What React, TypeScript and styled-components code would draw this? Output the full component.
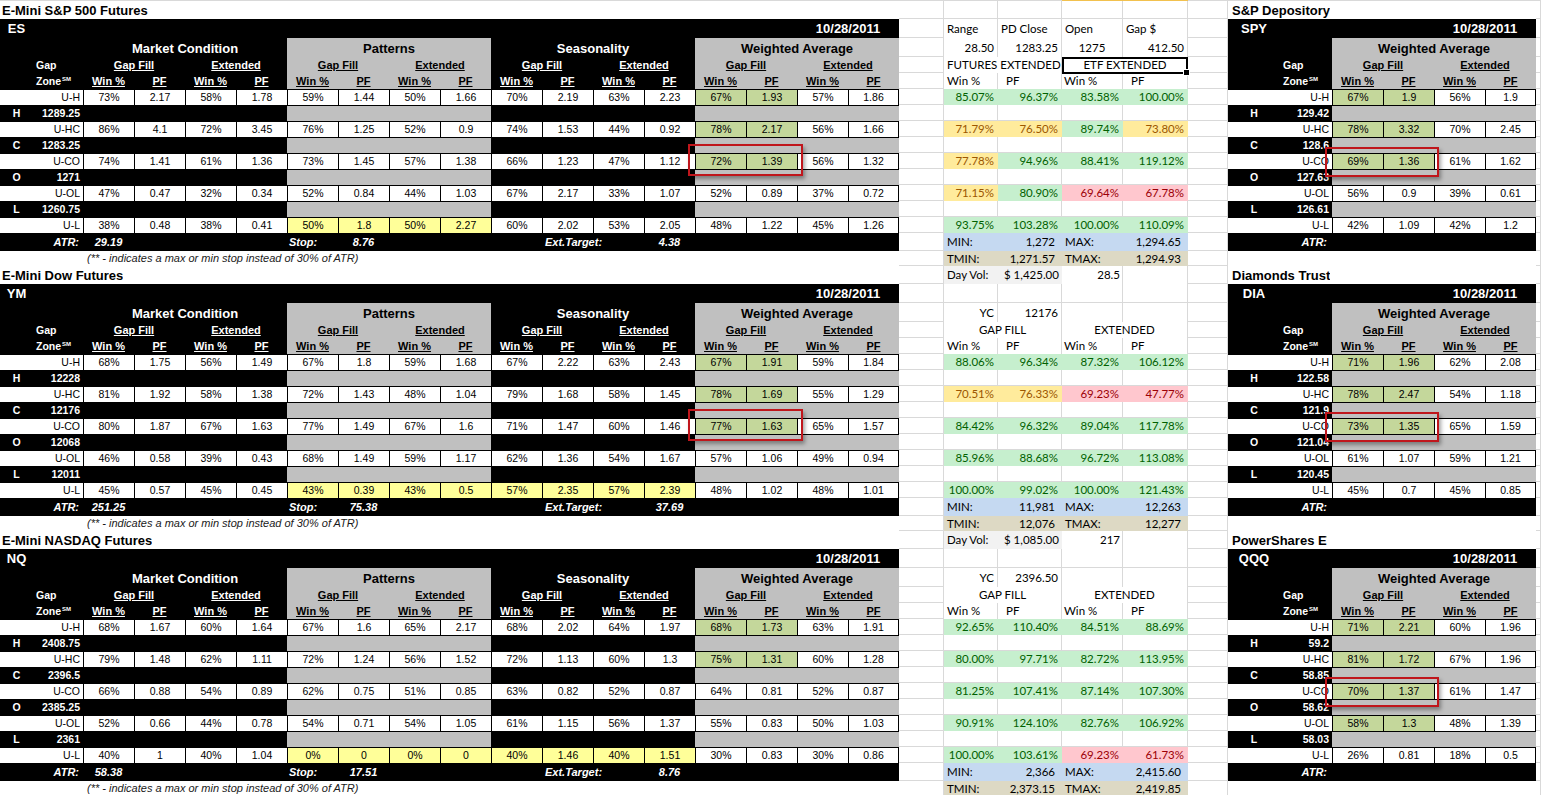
import React from 'react';
import styled, { createGlobalStyle } from 'styled-components';

const GRID = '#d9d9d9';
const GRAY = '#c0c0c0';
const OLIVE = '#c4d79b';
const LEMON = '#ffff99';
const ARIAL = '"Liberation Sans", Arial, sans-serif';
const CALIBRI = 'Lato, "Open Sans", sans-serif';
const DATE = '10/28/2011';
// row heights of one sheet section (title, code, 3 header rows, 9 zone rows, ATR, note)
const ROWS = [18, 19, 19, 16, 16, 16, 16, 16, 16, 16, 16, 16, 16, 16, 18, 15];
const ZONES = ['U-H', 'U-HC', 'U-CO', 'U-OL', 'U-L'];
const TAGS = ['H', 'C', 'O', 'L'];

type Align = 'left' | 'right' | 'center';
type Tone = 'g' | 'y' | 'r';
const TONE_FILL: Record<Tone, string> = { g: '#c6efce', y: '#ffeb9c', r: '#ffc7ce' };
const TONE_INK: Record<Tone, string> = { g: '#006100', y: '#9c5700', r: '#9c0006' };

interface Box { x: number; y: number; w: number; h: number }
interface Group { name: string; light: boolean }

interface Future {
  title: string;
  code: string;
  values: string[][];
  levels: string[];
  atr: string;
  stop: string;
  target: string;
  yellow: number[];
  green: number;
  mark: boolean;
}

interface Etf {
  title: string;
  clip?: number;
  code: string;
  values: string[][];
  levels: string[];
  green: number;
}

interface Spec { t?: string; a?: Align; p?: number }

interface Stats {
  heading: Spec[];
  basis: Spec[];
  captions: [string, string];
  picked: boolean;
  results: string[][];
  min: [string, string];
  max: [string, string];
  dayVol: [string, string];
}

const FUT_GROUPS: Group[] = [
  { name: 'Market Condition', light: false },
  { name: 'Patterns', light: true },
  { name: 'Seasonality', light: false },
  { name: 'Weighted Average', light: true },
];
const ETF_GROUPS: Group[] = [{ name: 'Weighted Average', light: true }];

const SECTIONS: { future: Future; stats: Stats; etf: Etf }[] = [
  {
    future: {
      title: 'E-Mini S&P 500 Futures',
      code: 'ES',
      values: [
        ['73%', '2.17', '58%', '1.78', '59%', '1.44', '50%', '1.66', '70%', '2.19', '63%', '2.23', '67%', '1.93', '57%', '1.86'],
        ['86%', '4.1', '72%', '3.45', '76%', '1.25', '52%', '0.9', '74%', '1.53', '44%', '0.92', '78%', '2.17', '56%', '1.66'],
        ['74%', '1.41', '61%', '1.36', '73%', '1.45', '57%', '1.38', '66%', '1.23', '47%', '1.12', '72%', '1.39', '56%', '1.32'],
        ['47%', '0.47', '32%', '0.34', '52%', '0.84', '44%', '1.03', '67%', '2.17', '33%', '1.07', '52%', '0.89', '37%', '0.72'],
        ['38%', '0.48', '38%', '0.41', '50%', '1.8', '50%', '2.27', '60%', '2.02', '53%', '2.05', '48%', '1.22', '45%', '1.26'],
      ],
      levels: ['1289.25', '1283.25', '1271', '1260.75'],
      atr: '29.19',
      stop: '8.76',
      target: '4.38',
      yellow: [1],
      green: 3,
      mark: true,
    },
    stats: {
      heading: [{ t: 'Range' }, { t: 'PD Close' }, { t: 'Open' }, { t: 'Gap $' }],
      basis: [{ t: '28.50', a: 'right' }, { t: '1283.25', a: 'right' }, { t: '1275', a: 'center' }, { t: '412.50', a: 'right' }],
      captions: ['FUTURES EXTENDED', 'ETF EXTENDED'],
      picked: true,
      results: [
        ['85.07%:g', '96.37%:g', '83.58%:g', '100.00%:g'],
        ['71.79%:y', '76.50%:y', '89.74%:g', '73.80%:y'],
        ['77.78%:y', '94.96%:g', '88.41%:g', '119.12%:g'],
        ['71.15%:y', '80.90%:g', '69.64%:r', '67.78%:r'],
        ['93.75%:g', '103.28%:g', '100.00%:g', '110.09%:g'],
      ],
      min: ['1,272', '1,294.65'],
      max: ['1,271.57', '1,294.93'],
      dayVol: ['$ 1,425.00', '28.5'],
    },
    etf: {
      title: 'S&P Depository',
      code: 'SPY',
      values: [
        ['67%', '1.9', '56%', '1.9'],
        ['78%', '3.32', '70%', '2.45'],
        ['69%', '1.36', '61%', '1.62'],
        ['56%', '0.9', '39%', '0.61'],
        ['42%', '1.09', '42%', '1.2'],
      ],
      levels: ['129.42', '128.6', '127.63', '126.61'],
      green: 3,
    },
  },
  {
    future: {
      title: 'E-Mini Dow Futures',
      code: 'YM',
      values: [
        ['68%', '1.75', '56%', '1.49', '67%', '1.8', '59%', '1.68', '67%', '2.22', '63%', '2.43', '67%', '1.91', '59%', '1.84'],
        ['81%', '1.92', '58%', '1.38', '72%', '1.43', '48%', '1.04', '79%', '1.68', '58%', '1.45', '78%', '1.69', '55%', '1.29'],
        ['80%', '1.87', '67%', '1.63', '77%', '1.49', '67%', '1.6', '71%', '1.47', '60%', '1.46', '77%', '1.63', '65%', '1.57'],
        ['46%', '0.58', '39%', '0.43', '68%', '1.49', '59%', '1.17', '62%', '1.36', '54%', '1.67', '57%', '1.06', '49%', '0.94'],
        ['45%', '0.57', '45%', '0.45', '43%', '0.39', '43%', '0.5', '57%', '2.35', '57%', '2.39', '48%', '1.02', '48%', '1.01'],
      ],
      levels: ['12228', '12176', '12068', '12011'],
      atr: '251.25',
      stop: '75.38',
      target: '37.69',
      yellow: [1, 2],
      green: 3,
      mark: true,
    },
    stats: {
      heading: [{}, {}, {}, {}],
      basis: [{ t: 'YC', a: 'right' }, { t: '12176', a: 'right' }, {}, {}],
      captions: ['GAP FILL', 'EXTENDED'],
      picked: false,
      results: [
        ['88.06%:g', '96.34%:g', '87.32%:g', '106.12%:g'],
        ['70.51%:y', '76.33%:y', '69.23%:r', '47.77%:r'],
        ['84.42%:g', '96.32%:g', '89.04%:g', '117.78%:g'],
        ['85.96%:g', '88.68%:g', '96.72%:g', '113.08%:g'],
        ['100.00%:g', '99.02%:g', '100.00%:g', '121.43%:g'],
      ],
      min: ['11,981', '12,263'],
      max: ['12,076', '12,277'],
      dayVol: ['$ 1,085.00', '217'],
    },
    etf: {
      title: 'Diamonds Trust',
      code: 'DIA',
      values: [
        ['71%', '1.96', '62%', '2.08'],
        ['78%', '2.47', '54%', '1.18'],
        ['73%', '1.35', '65%', '1.59'],
        ['61%', '1.07', '59%', '1.21'],
        ['45%', '0.7', '45%', '0.85'],
      ],
      levels: ['122.58', '121.9', '121.04', '120.45'],
      green: 3,
    },
  },
  {
    future: {
      title: 'E-Mini NASDAQ Futures',
      code: 'NQ',
      values: [
        ['68%', '1.67', '60%', '1.64', '67%', '1.6', '65%', '2.17', '68%', '2.02', '64%', '1.97', '68%', '1.73', '63%', '1.91'],
        ['79%', '1.48', '62%', '1.11', '72%', '1.24', '56%', '1.52', '72%', '1.13', '60%', '1.3', '75%', '1.31', '60%', '1.28'],
        ['66%', '0.88', '54%', '0.89', '62%', '0.75', '51%', '0.85', '63%', '0.82', '52%', '0.87', '64%', '0.81', '52%', '0.87'],
        ['52%', '0.66', '44%', '0.78', '54%', '0.71', '54%', '1.05', '61%', '1.15', '56%', '1.37', '55%', '0.83', '50%', '1.03'],
        ['40%', '1', '40%', '1.04', '0%', '0', '0%', '0', '40%', '1.46', '40%', '1.51', '30%', '0.83', '30%', '0.86'],
      ],
      levels: ['2408.75', '2396.5', '2385.25', '2361'],
      atr: '58.38',
      stop: '17.51',
      target: '8.76',
      yellow: [1, 2],
      green: 2,
      mark: false,
    },
    stats: {
      heading: [{}, {}, {}, {}],
      basis: [{ t: 'YC', a: 'right' }, { t: '2396.50', a: 'right' }, {}, {}],
      captions: ['GAP FILL', 'EXTENDED'],
      picked: false,
      results: [
        ['92.65%:g', '110.40%:g', '84.51%:g', '88.69%:g'],
        ['80.00%:g', '97.71%:g', '82.72%:g', '113.95%:g'],
        ['81.25%:g', '107.41%:g', '87.14%:g', '107.30%:g'],
        ['90.91%:g', '124.10%:g', '82.76%:g', '106.92%:g'],
        ['100.00%:g', '103.61%:g', '69.23%:r', '61.73%:r'],
      ],
      min: ['2,366', '2,415.60'],
      max: ['2,373.15', '2,419.85'],
      dayVol: ['', ''],
    },
    etf: {
      title: 'PowerShares ETF',
      clip: 95,
      code: 'QQQ',
      values: [
        ['71%', '2.21', '60%', '1.96'],
        ['81%', '1.72', '67%', '1.96'],
        ['70%', '1.37', '61%', '1.47'],
        ['58%', '1.3', '48%', '1.39'],
        ['26%', '0.81', '18%', '0.5'],
      ],
      levels: ['59.2', '58.85', '58.62', '58.03'],
      green: 4,
    },
  },
];

const GlobalStyle = createGlobalStyle`
  html, body { margin: 0; padding: 0; background: #fff; }
  body { overflow: hidden; }
`;

const Sheet = styled.div`
  width: 1541px;
  height: 795px;
  overflow: hidden;
  background: #fff;
`;

const TopRule = styled.div`
  display: flex;
  height: 1px;
`;

const RuleSeg = styled.span<{ $w: number; $gold?: boolean }>`
  width: ${p => p.$w}px;
  background: ${p => (p.$gold ? '#f2c14e' : GRID)};
`;

const Section = styled.div`
  display: grid;
  grid-template-columns: 899px 45px 244px 40px 308px 5px;
  height: 265px;
`;

const Column = styled.div`
  display: flex;
  flex-direction: column;
`;

const GapCell = styled.div<{ $h: number }>`
  height: ${p => p.$h}px;
  box-sizing: border-box;
  border-right: 1px solid ${GRID};
  border-bottom: 1px solid ${GRID};
`;

/* ---------- black zone tables ---------- */

const Block = styled.div`
  position: relative;
  display: flex;
  flex-direction: column;
  font-family: ${ARIAL};
  color: #000;
`;

const TitleRow = styled.div<{ $inset: number }>`
  height: 18px;
  box-sizing: border-box;
  padding: 0 0 1px ${p => p.$inset}px;
  display: flex;
  align-items: flex-end;
  font-size: 13px;
  font-weight: bold;
  line-height: 15px;
  background: #fff;
  white-space: nowrap;
`;

const TitleText = styled.span<{ $clip?: number }>`
  display: block;
  overflow: hidden;
  max-width: ${p => (p.$clip ? `${p.$clip}px` : 'none')};
`;

const CodeRow = styled.div`
  height: 19px;
  display: flex;
  justify-content: space-between;
  align-items: center;
  background: #000;
  color: #fff;
  font-size: 13px;
  font-weight: bold;
`;

const CodeCell = styled.span<{ $w: number }>`
  width: ${p => p.$w}px;
  text-align: center;
  white-space: nowrap;
`;

const HeaderRow = styled.div<{ $cols: string }>`
  display: grid;
  grid-template-columns: ${p => p.$cols};
  height: 51px;
  background: #000;
`;

const ZoneHead = styled.div<{ $indent: number }>`
  display: grid;
  grid-template-rows: 19px 16px 16px;
  padding-left: ${p => p.$indent}px;
  color: #fff;
  font-size: 10.5px;
  font-weight: bold;
  line-height: 16px;
  white-space: nowrap;

  sup {
    font-size: 6px;
    line-height: 0;
    vertical-align: 4px;
    margin-left: 1px;
  }
`;

const GroupHead = styled.div<{ $light: boolean }>`
  display: grid;
  grid-template-columns: repeat(4, 1fr);
  grid-template-rows: 19px 16px 16px;
  background: ${p => (p.$light ? GRAY : '#000')};
  color: ${p => (p.$light ? '#000' : '#fff')};
  font-weight: bold;
  text-align: center;
  white-space: nowrap;
`;

const GroupTitle = styled.span`
  grid-column: 1 / -1;
  font-size: 13px;
  line-height: 21px;
`;

const SubHead = styled.span`
  grid-column: span 2;
  font-size: 11px;
  line-height: 16px;
  text-decoration: underline;
`;

const ColHead = styled.span`
  font-size: 11px;
  line-height: 16px;
  text-decoration: underline;
`;

const SepRow = styled.div<{ $cols: string }>`
  display: grid;
  grid-template-columns: ${p => p.$cols};
  height: 16px;
  background: #000;
  color: #fff;
  font-size: 10.5px;
  font-weight: bold;
  line-height: 16px;
`;

const Tag = styled.span`
  text-align: center;
`;

const Price = styled.span`
  text-align: right;
  padding-right: 3px;
`;

const Band = styled.span<{ $light: boolean }>`
  background: ${p => (p.$light ? GRAY : '#000')};
  border-top: 1px solid #000;
`;

const DataRow = styled.div<{ $cols: string }>`
  display: grid;
  grid-template-columns: ${p => p.$cols};
  height: 16px;
  box-sizing: border-box;
  border-top: 1px solid #000;
  background: #fff;
  font-size: 10.5px;
  line-height: 15px;
`;

const ZoneName = styled.span`
  text-align: right;
  padding-right: 3px;
`;

const Value = styled.span<{ $fill?: string }>`
  text-align: center;
  border-left: 1px solid #000;
  background: ${p => p.$fill ?? '#fff'};

  &:last-child {
    border-right: 1px solid #000;
  }
`;

const FootRow = styled.div<{ $cols: string }>`
  display: grid;
  grid-template-columns: ${p => p.$cols};
  height: 18px;
  background: #000;
  color: #fff;
  font-size: 11px;
  font-weight: bold;
  font-style: italic;
  line-height: 18px;
  white-space: nowrap;
`;

const FootCell = styled.span<{ $col: number; $align: Align; $pad?: number }>`
  grid-column: ${p => p.$col};
  grid-row: 1;
  text-align: ${p => p.$align};
  padding: 0 ${p => p.$pad ?? 0}px;
`;

const NoteRow = styled.div`
  height: 15px;
  padding-left: 87px;
  font-size: 11px;
  font-style: italic;
  line-height: 15px;
  color: #1a1a1a;
  white-space: nowrap;
`;

const BlankRow = styled.div<{ $h: number }>`
  height: ${p => p.$h}px;
  background: #fff;
`;

const Mark = styled.div<{ $box: Box }>`
  position: absolute;
  left: ${p => p.$box.x}px;
  top: ${p => p.$box.y}px;
  width: ${p => p.$box.w}px;
  height: ${p => p.$box.h}px;
  box-sizing: border-box;
  border: 2px solid #c0161c;
  box-shadow: 2px 3px 4px rgba(0, 0, 0, 0.35);
  pointer-events: none;
`;

/* ---------- middle stats panel ---------- */

const Panel = styled.div`
  display: flex;
  flex-direction: column;
  font-family: ${CALIBRI};
  font-size: 11.5px;
  color: #000;
`;

const StatRow = styled.div<{ $h: number }>`
  display: grid;
  grid-template-columns: 54px 64px 61px 65px;
  height: ${p => p.$h}px;
  line-height: ${p => p.$h}px;
`;

const Cell = styled.div<{ $fill?: string; $ink?: string; $align?: Align; $pad?: number; $span?: number; $rule?: boolean }>`
  grid-column: span ${p => p.$span ?? 1};
  box-sizing: border-box;
  border-right: 1px solid ${p => p.$fill ?? GRID};
  border-bottom: 1px solid ${p => (p.$rule ? '#000' : GRID)};
  background: ${p => p.$fill ?? '#fff'};
  color: ${p => p.$ink ?? '#000'};
  text-align: ${p => p.$align ?? 'left'};
  padding: 0 ${p => p.$pad ?? 3}px;
  white-space: nowrap;
  line-height: inherit;
`;

const Picked = styled(Cell)`
  position: relative;
  border: 2px solid #000;
  line-height: 12px;

  &::after {
    content: '';
    position: absolute;
    right: -4px;
    bottom: -4px;
    width: 5px;
    height: 5px;
    background: #000;
    border: 1px solid #fff;
  }
`;

function GapColumn() {
  return (
    <Column>
      {ROWS.map((h, i) => (
        <GapCell key={i} $h={h} />
      ))}
    </Column>
  );
}

interface ZoneTableProps {
  title: string;
  inset: number;
  clip?: number;
  code: string;
  lead: [number, number];
  groups: Group[];
  values: string[][];
  levels: string[];
  fillFor: (row: number, col: number) => string | undefined;
  footer: React.ReactNode;
  last: React.ReactNode;
  mark?: Box;
}

function ZoneTable(props: ZoneTableProps) {
  const [a, b] = props.lead;
  const cells = props.groups.length * 4;
  const dataCols = `${a + b}px repeat(${cells}, 51px)`;
  const sepCols = `${a}px ${b}px repeat(${props.groups.length}, 204px)`;

  const zoneRow = (r: number) => (
    <DataRow key={`z${r}`} $cols={dataCols}>
      <ZoneName>{ZONES[r]}</ZoneName>
      {props.values[r].map((v, c) => (
        <Value key={c} $fill={props.fillFor(r, c)}>
          {v}
        </Value>
      ))}
    </DataRow>
  );

  return (
    <Block>
      <TitleRow $inset={props.inset}>
        <TitleText $clip={props.clip}>{props.title}</TitleText>
      </TitleRow>
      <CodeRow>
        <CodeCell $w={a}>{props.code}</CodeCell>
        <CodeCell $w={102}>{DATE}</CodeCell>
      </CodeRow>
      <HeaderRow $cols={`${a + b}px repeat(${props.groups.length}, 204px)`}>
        <ZoneHead $indent={a + 3}>
          <span />
          <span>Gap</span>
          <span>
            Zone<sup>SM</sup>
          </span>
        </ZoneHead>
        {props.groups.map(g => (
          <GroupHead key={g.name} $light={g.light}>
            <GroupTitle>{g.name}</GroupTitle>
            <SubHead>Gap Fill</SubHead>
            <SubHead>Extended</SubHead>
            <ColHead>Win %</ColHead>
            <ColHead>PF</ColHead>
            <ColHead>Win %</ColHead>
            <ColHead>PF</ColHead>
          </GroupHead>
        ))}
      </HeaderRow>
      {ZONES.map((_, r) => (
        <React.Fragment key={r}>
          {zoneRow(r)}
          {r < TAGS.length && (
            <SepRow $cols={sepCols}>
              <Tag>{TAGS[r]}</Tag>
              <Price>{props.levels[r]}</Price>
              {props.groups.map(g => (
                <Band key={g.name} $light={g.light} />
              ))}
            </SepRow>
          )}
        </React.Fragment>
      ))}
      {props.footer}
      {props.last}
      {props.mark && <Mark $box={props.mark} />}
    </Block>
  );
}

function FuturesTable({ data }: { data: Future }) {
  const cols = '83px repeat(16, 51px)';
  return (
    <ZoneTable
      title={data.title}
      inset={2}
      code={data.code}
      lead={[33, 50]}
      groups={FUT_GROUPS}
      values={data.values}
      levels={data.levels}
      fillFor={(r, c) => {
        if (r === 4 && data.yellow.includes(Math.floor(c / 4))) return LEMON;
        if ((c === 12 || c === 13) && r < data.green) return OLIVE;
        return undefined;
      }}
      footer={
        <FootRow $cols={cols}>
          <FootCell $col={1} $align="right" $pad={4}>ATR:</FootCell>
          <FootCell $col={2} $align="center">{data.atr}</FootCell>
          <FootCell $col={6} $align="left" $pad={2}>Stop:</FootCell>
          <FootCell $col={7} $align="center">{data.stop}</FootCell>
          <FootCell $col={11} $align="left" $pad={3}>Ext.Target:</FootCell>
          <FootCell $col={13} $align="center">{data.target}</FootCell>
        </FootRow>
      }
      last={<NoteRow>(** - indicates a max or min stop instead of 30% of ATR)</NoteRow>}
      mark={data.mark ? { x: 688, y: 143, w: 115, h: 32 } : undefined}
    />
  );
}

function EtfTable({ data }: { data: Etf }) {
  return (
    <ZoneTable
      title={data.title}
      inset={4}
      clip={data.clip}
      code={data.code}
      lead={[52, 52]}
      groups={ETF_GROUPS}
      values={data.values}
      levels={data.levels}
      fillFor={(r, c) => (c < 2 && r < data.green ? OLIVE : undefined)}
      footer={
        <FootRow $cols="104px repeat(4, 51px)">
          <FootCell $col={1} $align="right" $pad={5}>ATR:</FootCell>
        </FootRow>
      }
      last={<BlankRow $h={ROWS[15]} />}
      mark={{ x: 97, y: 146, w: 114, h: 30 }}
    />
  );
}

function specCell(s: Spec, key: number) {
  return (
    <Cell key={key} $align={s.a} $pad={s.p}>
      {s.t}
    </Cell>
  );
}

function resultCell(v: string, key: number) {
  const [text, tone] = v.split(':') as [string, Tone];
  return (
    <Cell key={key} $align="right" $fill={TONE_FILL[tone]} $ink={TONE_INK[tone]}>
      {text}
    </Cell>
  );
}

function blankRow(i: number) {
  return (
    <StatRow key={i} $h={ROWS[i]}>
      <Cell />
      <Cell />
      <Cell />
      <Cell />
    </StatRow>
  );
}

function StatsPanel({ stats, carry }: { stats: Stats; carry?: [string, string] }) {
  const CapCell = stats.picked ? Picked : Cell;
  return (
    <Panel>
      {carry ? (
        <StatRow $h={ROWS[0]}>
          <Cell $fill="#f2f2f2">Day Vol:</Cell>
          <Cell $fill="#f2f2f2" $align="right" $pad={6}>{carry[0]}</Cell>
          <Cell $align="right" $pad={2}>{carry[1]}</Cell>
          <Cell />
        </StatRow>
      ) : (
        blankRow(0)
      )}
      <StatRow $h={ROWS[1]}>{stats.heading.map(specCell)}</StatRow>
      <StatRow $h={ROWS[2]}>{stats.basis.map(specCell)}</StatRow>
      <StatRow $h={ROWS[3]}>
        <Cell $span={2} $align="center">{stats.captions[0]}</Cell>
        <CapCell $span={2} $align="center">{stats.captions[1]}</CapCell>
      </StatRow>
      <StatRow $h={ROWS[4]}>
        <Cell $rule>Win %</Cell>
        <Cell $rule $pad={8}>PF</Cell>
        <Cell $rule $pad={2}>Win %</Cell>
        <Cell $rule $pad={8}>PF</Cell>
      </StatRow>
      {stats.results.map((row, r) => (
        <React.Fragment key={r}>
          <StatRow $h={ROWS[5 + r * 2]}>{row.map(resultCell)}</StatRow>
          {r < 4 && blankRow(6 + r * 2)}
        </React.Fragment>
      ))}
      <StatRow $h={ROWS[14]}>
        <Cell $fill="#c5d9f1">MIN:</Cell>
        <Cell $fill="#c5d9f1" $align="right" $pad={6}>{stats.min[0]}</Cell>
        <Cell $fill="#c5d9f1">MAX:</Cell>
        <Cell $fill="#c5d9f1" $align="right" $pad={6}>{stats.min[1]}</Cell>
      </StatRow>
      <StatRow $h={ROWS[15]}>
        <Cell $fill="#ddd9c4">TMIN:</Cell>
        <Cell $fill="#ddd9c4" $align="right" $pad={6}>{stats.max[0]}</Cell>
        <Cell $fill="#ddd9c4">TMAX:</Cell>
        <Cell $fill="#ddd9c4" $align="right" $pad={6}>{stats.max[1]}</Cell>
      </StatRow>
    </Panel>
  );
}

export default function App() {
  return (
    <>
      <GlobalStyle />
      <Sheet>
        <TopRule>
          <RuleSeg $w={1062} />
          <RuleSeg $w={126} $gold />
          <RuleSeg $w={353} />
        </TopRule>
        {SECTIONS.map((s, i) => (
          <Section key={s.future.code}>
            <FuturesTable data={s.future} />
            <GapColumn />
            <StatsPanel stats={s.stats} carry={i > 0 ? SECTIONS[i - 1].stats.dayVol : undefined} />
            <GapColumn />
            <EtfTable data={s.etf} />
            <GapColumn />
          </Section>
        ))}
      </Sheet>
    </>
  );
}
